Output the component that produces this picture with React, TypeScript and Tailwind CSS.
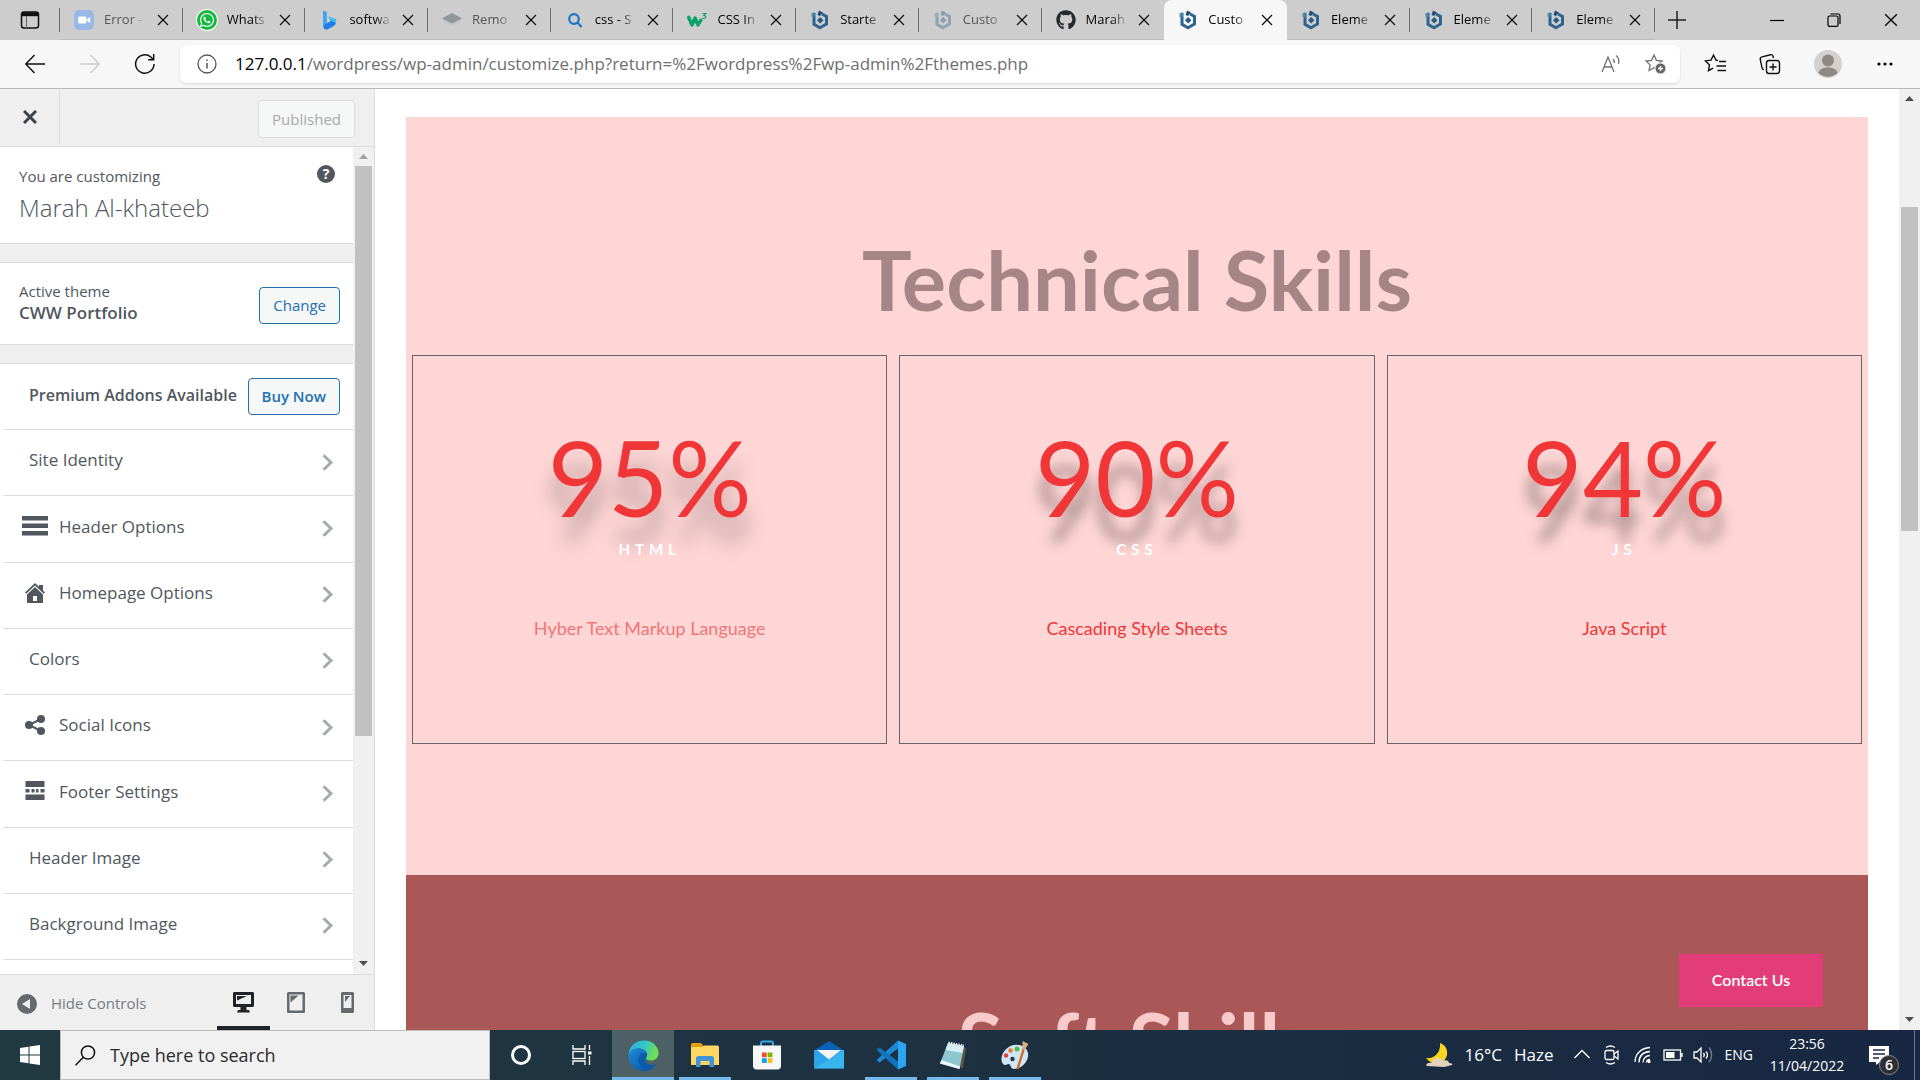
import React from "react";
import { FaGithub, FaWhatsapp } from "react-icons/fa";

type IconProps = { className?: string };

/* ---------- Browser icons ---------- */

const TabActionsIcon = () => (
  <svg className="size-5" viewBox="0 0 20 20" fill="none" stroke="#111" strokeWidth="1.5">
    <rect x="1.5" y="2" width="17" height="16" rx="2.5" />
    <path d="M2 4.2h16" strokeWidth="4" />
    <path d="M6.5 6v12" strokeWidth="1" stroke="#666" />
  </svg>
);

const ZoomIcon = () => (
  <svg className="size-5" viewBox="0 0 20 20">
    <rect width="20" height="20" rx="5" fill="#98b8e8" />
    <rect x="4" y="6.5" width="8.5" height="7" rx="1.5" fill="#fff" />
    <path d="M13.2 9l3-2v6l-3-2z" fill="#fff" />
  </svg>
);

const WhatsappIcon = () => (
  <span className="flex size-5 items-center justify-center rounded-full bg-[#12b93c] ring-1 ring-white">
    <FaWhatsapp className="size-4 text-white" />
  </span>
);

const BingIcon = () => (
  <svg className="size-5" viewBox="0 0 20 20">
    <path d="M4 0.5l3.8 1.4v11.4L4.2 15.4z" fill="#3aa4f2" />
    <path d="M4.2 15.2l3.6-2 4-2-2.2-4.6L17 9.4c.6 3.8-.6 5.6-3 7l-5.600 3c-2.400.7-4.200-1-4.200-4.200z" fill="#1f7de8" />
    <path d="M9.500 6.600L15.500 9c2 1.200 2 3 1.200 4.400-1-1.400-2.500-2-4.700-2.600z" fill="#3cc5f3" />
  </svg>
);

const LayersIcon = () => (
  <svg className="size-5" viewBox="0 0 20 20">
    <path d="M10 4.500l10 5.500-10 5.500L0 10z" fill="#bfc3c6" />
    <path d="M10 3l10 5.200-10 5.200L0 8.200z" fill="#90979c" />
  </svg>
);

const SearchTabIcon = () => (
  <svg className="size-5" viewBox="0 0 20 20" fill="none" stroke="#1a74c9" strokeWidth="2.200">
    <circle cx="9" cy="9" r="4.800" />
    <path d="M12.600 12.800l4 4.200" />
  </svg>
);

const W3Icon = () => (
  <svg className="size-5" viewBox="0 0 20 20" fill="none" stroke="#0ba26b">
    <path d="M1 6l4 9 3-7 3 7 3.500-6" strokeWidth="3.400" strokeLinejoin="round" />
    <path d="M15.500 3.500h3.200l-1.700 2c2.200 0 2.200 3-.2 3-.8 0-1.300-.3-1.600-.8" strokeWidth="1.200" />
  </svg>
);

const CustomIcon = ({ className = "" }: IconProps) => (
  <svg className={`size-5 ${className}`} viewBox="0 0 20 20" fill="none">
    <path d="M4 3v11.300l6 3.400 6.500-3.700V6.500L12 4" stroke="#2f648f" strokeWidth="3" />
    <path d="M9 0.500l4 2-3 3.500-2.500-1z" fill="#1f4e78" />
    <path d="M1.500 3.500l3-1.500v5h-3z" fill="#4f86ad" />
    <path d="M10.200 7l3.200 3.200-3.200 3.200L7 10.200z" fill="#2a5a85" />
  </svg>
);

const CloseIcon = ({ className = "" }: IconProps) => (
  <svg className={className} viewBox="0 0 12 12" stroke="currentColor" strokeWidth="1.300" fill="none">
    <path d="M1 1l10 10M11 1L1 11" />
  </svg>
);

type Tab = { title: string; icon: React.ReactNode; muted?: boolean; active?: boolean; divider?: boolean };

const tabs: Tab[] = [
  { title: "Error -", icon: <ZoomIcon />, muted: true, divider: true },
  { title: "Whats", icon: <WhatsappIcon />, divider: true },
  { title: "softwa", icon: <BingIcon />, divider: true },
  { title: "Remo", icon: <LayersIcon />, muted: true, divider: true },
  { title: "css - S", icon: <SearchTabIcon />, divider: true },
  { title: "CSS In", icon: <W3Icon />, divider: true },
  { title: "Starte", icon: <CustomIcon />, divider: true },
  { title: "Custo", icon: <CustomIcon className="opacity-40" />, muted: true, divider: true },
  { title: "Marah", icon: <FaGithub className="size-5 text-[#24292f]" /> },
  { title: "Custo", icon: <CustomIcon />, active: true },
  { title: "Eleme", icon: <CustomIcon />, divider: true },
  { title: "Eleme", icon: <CustomIcon />, divider: true },
  { title: "Eleme", icon: <CustomIcon />, divider: true },
];

function TabStrip() {
  return (
    <div className="flex h-10 shrink-0 bg-[#cdcdcd] text-[#111]">
      <button aria-label="Tab actions" className="relative flex w-[60px] shrink-0 items-center justify-center">
        <TabActionsIcon />
        <span className="absolute right-0 h-6 w-px bg-[#6f6f6f]" />
      </button>
      <div className="flex min-w-0 flex-1">
        {tabs.map((tab, i) => (
          <div
            key={i}
            className={`relative flex min-w-0 flex-1 items-center pl-3.5 pr-3 ${tab.active ? "rounded-t-lg bg-[#f7f7f7]" : "border-b border-[#bdbdbd]"}`}
          >
            <span className="flex shrink-0">{tab.icon}</span>
            <a
              href="#"
              className={`ml-2.5 min-w-0 flex-1 whitespace-nowrap text-[13px] mask-r-from-60% ${tab.muted ? "text-[#555]" : "text-black"}`}
            >
              {tab.title}
            </a>
            <button aria-label={`Close ${tab.title}`} className="ml-2 flex size-4 shrink-0 items-center justify-center">
              <CloseIcon className="size-3" />
            </button>
            {tab.divider && <span className="absolute right-0 h-6 w-px bg-[#6f6f6f]" />}
          </div>
        ))}
      </div>
      <div className="flex w-[265px] shrink-0 items-center">
        <button aria-label="New tab" className="flex w-11 justify-center">
          <svg className="size-[18px]" viewBox="0 0 18 18" stroke="#222" strokeWidth="1.500">
            <path d="M9 0v18M0 9h18" />
          </svg>
        </button>
        <div className="ml-auto flex">
          <button aria-label="Minimise" className="flex w-[57px] items-center justify-center">
            <svg className="size-3.5" viewBox="0 0 14 14" stroke="#000" strokeWidth="1.200">
              <path d="M0 7.500h14" />
            </svg>
          </button>
          <button aria-label="Restore" className="flex w-[57px] items-center justify-center">
            <svg className="size-3.5" viewBox="0 0 14 14" stroke="#000" fill="none" strokeWidth="1.200">
              <rect x="1" y="3" width="10" height="10.400" rx="1.500" />
              <path d="M3.500 1h7.500c1.500 0 2 .8 2 2v8" />
            </svg>
          </button>
          <button aria-label="Close window" className="flex w-[58px] items-center justify-center">
            <CloseIcon className="size-3.5" />
          </button>
        </div>
      </div>
    </div>
  );
}

const starPath = "M10 2l2.400 5.300 5.600.7-4.100 3.900 1 5.700L10 14.800l-4.900 2.800 1-5.700L2 8l5.600-.7z";

function Toolbar() {
  return (
    <div className="flex h-[49px] shrink-0 items-center border-b border-[#b9b9b9] bg-[#f7f7f7]">
      <div className="flex w-[180px] shrink-0 items-center pl-[7px]">
        <button aria-label="Back" className="flex w-[55px] justify-center">
          <svg className="size-5" viewBox="0 0 20 20" fill="none" stroke="#111" strokeWidth="1.400">
            <path d="M20 10H1M9.500 1L0.800 10l8.700 9" />
          </svg>
        </button>
        <button aria-label="Forward" className="flex w-[55px] justify-center" disabled>
          <svg className="size-5" viewBox="0 0 20 20" fill="none" stroke="#ccc" strokeWidth="1.400">
            <path d="M0 10h19M10.500 1l8.700 9-8.700 9" />
          </svg>
        </button>
        <button aria-label="Refresh" className="flex w-[55px] justify-center">
          <svg className="size-[22px]" viewBox="0 0 22 22" fill="none" stroke="#111" strokeWidth="1.500">
            <path d="M20 11a9.200 9.200 0 1 1-3.200-7l2.600 2.600M19.700 1v5.800h-5.600" />
          </svg>
        </button>
      </div>
      <div className="flex h-[38px] min-w-0 flex-1 items-center rounded-md bg-white pl-[17px] pr-3.5 shadow-sm">
        <svg className="size-5 shrink-0" viewBox="0 0 20 20" fill="none" stroke="#555" strokeWidth="1.300">
          <circle cx="10" cy="10" r="9" />
          <path d="M10 9v5.500M10 5.500v1.500" strokeWidth="1.500" />
        </svg>
        <a href="#" className="ml-[18px] flex-1 truncate text-[17px] text-[#6e6e6e]">
          <span className="text-black">127.0.0.1</span>/wordpress/wp-admin/customize.php?return=%2Fwordpress%2Fwp-admin%2Fthemes.php
        </a>
        <button aria-label="Read aloud" className="mr-[23px]">
          <svg className="size-5" viewBox="0 0 20 20" fill="none" stroke="#707070" strokeWidth="1.300">
            <path d="M1 18L7 3l6 15M3 13h8M12 5c1 1 1.400 2.400 1.200 4M15 1.500c2.500 2 3.400 5 2.600 8.500" />
          </svg>
        </button>
        <button aria-label="Add to favorites">
          <svg className="size-[22px]" viewBox="0 0 22 22" fill="none" stroke="#707070" strokeWidth="1.300">
            <path d={starPath} />
            <circle cx="16.500" cy="15.500" r="5.500" fill="#666" stroke="#fff" strokeWidth="1" />
            <path d="M16.500 13v5M14 15.500h5" stroke="#fff" />
          </svg>
        </button>
      </div>
      <div className="flex w-60 shrink-0 items-center pl-2">
        <button aria-label="Favorites" className="flex w-[54px] justify-center">
          <svg className="size-[22px]" viewBox="0 0 22 22" fill="none" stroke="#111" strokeWidth="1.400">
            <path d="M14 7.500l-2-.4L9.500 2 7 7.100l-5.600.8 4.100 4-1 5.700 4.600-2.400M15 8.500h7M12.500 13H22M13.500 17.500H22" />
          </svg>
        </button>
        <button aria-label="Collections" className="flex w-14 justify-center">
          <svg className="size-[22px]" viewBox="0 0 22 22" fill="none" stroke="#111" strokeWidth="1.400">
            <rect x="7.500" y="7.500" width="13" height="13" rx="2.500" />
            <path d="M14 10.500v7M10.500 14h7M5 16.500c-1 0-1.700-.5-2-1.700L1.300 6.500C1 5 1.700 4.200 3 3.900l8.500-2.200c1.400-.2 2.200.4 2.500 1.500l.5 1.800" />
          </svg>
        </button>
        <button aria-label="Profile" className="flex w-[60px] justify-center">
          <svg className="size-7" viewBox="0 0 28 28">
            <circle cx="14" cy="14" r="14" fill="#d3d0cd" />
            <circle cx="14" cy="10.500" r="6" fill="#8d8884" />
            <path d="M4.500 23c1-4 4.500-5.500 9.500-5.500s8.500 1.500 9.500 5.500a14 14 0 0 1-19 0z" fill="#8d8884" />
          </svg>
        </button>
        <button aria-label="Settings and more" className="flex w-[54px] justify-center">
          <svg className="size-4" viewBox="0 0 16 16">
            <circle cx="2" cy="8" r="1.600" />
            <circle cx="8" cy="8" r="1.600" />
            <circle cx="14" cy="8" r="1.600" />
          </svg>
        </button>
      </div>
    </div>
  );
}

/* ---------- Scroll bar ---------- */

function ScrollBar({ topMuted, children }: { topMuted?: boolean; children: React.ReactNode }) {
  return (
    <div className="flex w-[21px] shrink-0 flex-col bg-[#f0f0f0]">
      <button aria-label="Scroll up" className="flex h-[19px] shrink-0 items-center justify-center">
        <svg className="h-[5px] w-[9px]" viewBox="0 0 9 5" fill={topMuted ? "#a0a0a0" : "#505050"}>
          <path d="M0 5l4.500-5L9 5z" />
        </svg>
      </button>
      <div className="flex min-h-0 flex-1 flex-col px-0.5">{children}</div>
      <button aria-label="Scroll down" className="flex h-[22px] shrink-0 items-center justify-center">
        <svg className="h-[5px] w-[9px]" viewBox="0 0 9 5" fill="#505050">
          <path d="M0 0h9L4.500 5z" />
        </svg>
      </button>
    </div>
  );
}

/* ---------- Customizer sidebar ---------- */

const MenuBarsIcon = () => (
  <svg className="h-5 w-[26px]" viewBox="0 0 26 20" fill="#50575e">
    <path d="M0 0h26v4.500H0zM0 7.500h26V12H0zM0 15h26v4.500H0z" />
  </svg>
);

const HomeIcon = () => (
  <svg className="size-5" viewBox="0 0 20 20" fill="#50575e">
    <path d="M10 0l4 3.800V2h4v5.500l2 2-1.200 1.200L10 2.400 1.200 10.700 0 9.500z" />
    <path fillRule="evenodd" d="M10 4l8 7.500V20H2v-8.500zM8 13v5h4v-5z" />
  </svg>
);

const ShareIcon = () => (
  <svg className="size-5" viewBox="0 0 20 20" fill="#50575e">
    <circle cx="4" cy="10" r="4" />
    <circle cx="16" cy="4" r="4" />
    <circle cx="16" cy="16" r="4" />
    <path d="M16 4L4 10l12 6" fill="none" stroke="#50575e" strokeWidth="2" />
  </svg>
);

const FooterIcon = () => (
  <svg className="size-5" viewBox="0 0 20 20" fill="#50575e">
    <path d="M0.500 0h19v6h-19zM0.500 8h4v3.500h-4zM6.500 8h3v3.500h-3zM11 8h2.500v3.500H11zM15.500 8h4v3.500h-4zM0.500 13.500h19v5.500h-19z" />
  </svg>
);

const panels: { label: string; icon?: React.ReactNode }[] = [
  { label: "Site Identity" },
  { label: "Header Options", icon: <MenuBarsIcon /> },
  { label: "Homepage Options", icon: <HomeIcon /> },
  { label: "Colors" },
  { label: "Social Icons", icon: <ShareIcon /> },
  { label: "Footer Settings", icon: <FooterIcon /> },
  { label: "Header Image" },
  { label: "Background Image" },
];

function Sidebar() {
  return (
    <aside className="flex w-[375px] shrink-0 flex-col border-r border-[#dcdcde] bg-[#efefef] text-[#50575e]">
      <header className="flex h-[58px] shrink-0 items-start justify-between border-b border-[#dcdcde]">
        <button aria-label="Close customizer" className="flex h-[55px] w-[60px] items-center justify-center border-r border-[#dcdcde] text-[#3c434a]">
          <svg className="size-3.5" viewBox="0 0 14 14" stroke="currentColor" strokeWidth="3">
            <path d="M1 1l12 12M13 1L1 13" />
          </svg>
        </button>
        <button disabled className="mr-[19px] mt-[11px] h-[38px] rounded-[4px] border border-[#dcdcde] bg-[#f6f7f7] px-[13px] text-[15px] text-[#a7aaad]">
          Published
        </button>
      </header>

      <div className="flex min-h-0 flex-1">
        <div className="flex min-w-0 flex-1 flex-col">
          <section className="flex h-[97px] shrink-0 justify-between border-b border-[#dcdcde] bg-white pl-[19px] pr-[18px] pt-[17px]">
            <div>
              <p className="text-[15px] leading-6">You are customizing</p>
              <h1 className="mt-1 text-2xl font-light leading-8">Marah Al-khateeb</h1>
            </div>
            <button aria-label="Help" className="mt-px flex size-[18px] items-center justify-center rounded-full bg-[#50575e] text-sm font-bold text-white">
              ?
            </button>
          </section>

          <section className="mt-[18px] flex h-[83px] shrink-0 items-center justify-between border-y border-[#dcdcde] bg-white pl-[19px] pr-[13px]">
            <div className="pb-0.5">
              <p className="text-[15px] leading-5">Active theme</p>
              <h2 className="text-[17px] font-semibold leading-6">CWW Portfolio</h2>
            </div>
            <button className="mt-1 h-[37px] rounded-[4px] border border-[#2271b1] bg-[#f6f7f7] px-[13px] text-[15px] text-[#2271b1]">Change</button>
          </section>

          <section className="mt-[18px] flex h-[66px] shrink-0 items-center justify-between border-t border-[#dcdcde] bg-white pb-px pl-[29px] pr-[13px]">
            <h2 className="whitespace-nowrap pb-0.5 text-base font-semibold">Premium Addons Available</h2>
            <button className="h-[37px] whitespace-nowrap rounded-[4px] border border-[#2271b1] bg-[#f6f7f7] px-[13px] text-[15px] font-semibold text-[#2271b1]">
              Buy Now
            </button>
          </section>

          <ul className="flex min-h-0 flex-1 flex-col bg-white pb-[15px] pl-[3px]">
            {panels.map((panel) => (
              <li key={panel.label} className="flex min-h-0 flex-1 border-t border-[#dcdcde]">
                <button className="flex w-full items-center pb-px pr-[19px] text-left">
                  {panel.icon && (
                    <span className="ml-4 flex w-10 items-center pb-1 pl-[3px]">
                      <span className="flex w-[26px] justify-center">{panel.icon}</span>
                    </span>
                  )}
                  <span className={`flex-1 pb-1 text-[17px] font-medium ${panel.icon ? "" : "pl-[26px]"}`}>{panel.label}</span>
                  <svg className="h-[17px] w-3" viewBox="0 0 12 17" fill="none" stroke="#a7aaad" strokeWidth="3">
                    <path d="M1.500 1.200l7.500 7.300-7.500 7.300" />
                  </svg>
                </button>
              </li>
            ))}
            <li className="-mb-[15px] h-[15px] shrink-0 border-t border-[#dcdcde]" />
          </ul>
        </div>
        <ScrollBar topMuted>
          <div className="min-h-0 flex-[29] bg-[#c1c1c1]" />
          <div className="min-h-0 flex-[11]" />
        </ScrollBar>
      </div>

      <footer className="flex h-14 shrink-0 items-stretch justify-between border-t border-[#dcdcde] bg-[#efefef]">
        <button className="flex items-center gap-3.5 pl-[17px] pt-0.5 text-[15px] text-[#787c82]">
          <svg className="size-5" viewBox="0 0 20 20">
            <circle cx="10" cy="10" r="10" fill="#656a6f" />
            <path d="M13 5v10l-8-5z" fill="#efefef" />
          </svg>
          Hide Controls
        </button>
        <div className="flex">
          <button aria-label="Desktop preview" className="flex w-[53px] items-center justify-center border-b-4 border-[#1d2327] pt-1">
            <svg className="size-[21px]" viewBox="0 0 21 21" fill="#1d2327">
              <path fillRule="evenodd" d="M1 0h19l1 1v13l-1 1h-6.500v3H16l1 2.500H4L5 18h2.500v-3H1l-1-1V1zM3 3v9h15V3z" />
              <path d="M4 4h10L4 8.500z" />
            </svg>
          </button>
          <button aria-label="Tablet preview" className="flex w-[51px] items-center justify-center">
            <svg className="h-[21px] w-[18px]" viewBox="0 0 18 21" fill="#656a6f">
              <path fillRule="evenodd" d="M1 0h16l1 1v19l-1 1H1l-1-1V1zM2.500 2.500v16h13v-16z" />
              <path d="M3.500 3.500h8l-8 7z" />
            </svg>
          </button>
          <button aria-label="Mobile preview" className="flex w-[53px] items-center justify-center">
            <svg className="h-[21px] w-[13px]" viewBox="0 0 13 21" fill="#656a6f">
              <path fillRule="evenodd" d="M1 0h11l1 1v19l-1 1H1l-1-1V1zM2.500 3v13h8V3z" />
              <path d="M4 4h5l-5 6z" />
            </svg>
          </button>
        </div>
      </footer>
    </aside>
  );
}

/* ---------- Site preview ---------- */

const skills = [
  { value: "95%", name: "HTML", text: "Hyber Text Markup Language", textColor: "text-[#f07676]", shadow: "[text-shadow:0_25px_20px_rgba(0,0,0,0.3)]" },
  { value: "90%", name: "CSS", text: "Cascading Style Sheets", textColor: "text-[#f13637]", shadow: "[text-shadow:0_25px_14px_rgba(0,0,0,0.35)]" },
  { value: "94%", name: "JS", text: "Java Script", textColor: "text-[#f13637]", shadow: "[text-shadow:0_25px_14px_rgba(0,0,0,0.35)]" },
];

function Preview() {
  return (
    <div className="relative flex min-w-0 flex-1 bg-white">
      <main className="min-w-0 flex-1 overflow-hidden px-[31px] pt-7 font-[Lato,sans-serif]">
        <section className="bg-[#ffd6d6] px-1.5 pb-[131px] pt-[114px]">
          <h2 className="text-center text-[83px] font-bold leading-[96px] text-[#a58585]">Technical Skills</h2>
          <div className="mt-7 grid grid-cols-3 gap-3">
            {skills.map((skill) => (
              <article key={skill.name} className="flex h-[389px] flex-col items-center border border-[#666] pt-[65px] text-center">
                <p className={`text-[104px] leading-[112px] text-[#f13637] ${skill.shadow}`}>{skill.value}</p>
                <h3 className="relative mt-1 text-[15px] font-bold leading-6 tracking-[5px] text-white">{skill.name}</h3>
                <p className={`mt-[53px] text-lg leading-7 ${skill.textColor}`}>{skill.text}</p>
              </article>
            ))}
          </div>
        </section>
        <section className="h-80 bg-[#aa5757] pt-[118px]">
          <h2 className="text-center text-[83px] font-bold leading-[96px] text-[#f9caca]">Soft Skills</h2>
        </section>
      </main>
      <a href="#" className="absolute bottom-[23px] right-[97px] flex h-[53px] w-36 items-center justify-center bg-[#e23d78] pb-0.5 font-[Lato,sans-serif] text-base font-semibold text-white">
        Contact Us
      </a>
      <ScrollBar>
        <div className="min-h-0 flex-[11]" />
        <div className="min-h-0 flex-[36] bg-[#c1c1c1]" />
        <div className="min-h-0 flex-[53]" />
      </ScrollBar>
    </div>
  );
}

/* ---------- Taskbar ---------- */

const EdgeIcon = () => (
  <svg className="size-[31px]" viewBox="0 0 31 31">
    <defs>
      <linearGradient id="edgeTop" x1="0" y1="0" x2="1" y2="0.300">
        <stop offset="0" stopColor="#2fa9e6" />
        <stop offset="0.550" stopColor="#31c6c9" />
        <stop offset="1" stopColor="#6fe04e" />
      </linearGradient>
      <linearGradient id="edgeLow" x1="0" y1="0" x2="1" y2="1">
        <stop offset="0" stopColor="#1b8ddb" />
        <stop offset="1" stopColor="#0c4f9c" />
      </linearGradient>
    </defs>
    <path d="M0.500 15C1 6 7.500 0.500 16 0.500c9 0 14.500 6.500 14.500 12.500 0 5-3.500 7.500-7.500 7.500-3 0-5-1-5-2.300 0-.8 1.200-1.500 1.200-3.500 0-3.500-4-6.200-8.700-6.200C6 8.500 2 11 .5 15z" fill="url(#edgeTop)" />
    <path d="M0.500 15C2 10.500 6 8.500 10.500 8.500c4.500 0 8 2.300 8.600 5.200C15 11.500 11 15 11 19.500c0 5 5 8.500 10 8.500 2.500 0 4-.5 5.500-1.500C24 29.500 20.500 31 16 31 7 31 0.300 24 0.500 15z" fill="url(#edgeLow)" />
    <path d="M19.100 13.700C14 11.500 10.500 15.500 10.500 20c0 5.500 5 10.500 10.500 9.800 3.500-1 6.500-3.500 7.800-6.300-7 3.300-13 .5-11-5.300z" fill="#0d5bab" />
  </svg>
);

const ExplorerIcon = () => (
  <svg className="h-6 w-7" viewBox="0 0 28 24">
    <path d="M0 1.500C0 .7.700 0 1.500 0H10l2.500 3H26v4H0z" fill="#e0a010" />
    <path d="M0 4h11l2-1.500h13c1 0 2 .7 2 1.500v18H0z" fill="#fdd663" />
    <path d="M5 24v-8.500C5 14 6 13 7.500 13h13c1.500 0 2.500 1 2.500 2.500V24h-4.500v-6h-9v6z" fill="#3f93d6" />
  </svg>
);

const StoreIcon = () => (
  <svg className="size-[30px]" viewBox="0 0 30 30">
    <path d="M9 7V3.500C9 2 9.500 1.500 11 1.500h8c1.500 0 2 .5 2 2V7" fill="none" stroke="#35a9ec" strokeWidth="2" />
    <path d="M1 5.500h28V26c0 2.200-1.300 3.500-3.500 3.500h-21C2.300 29.500 1 28.200 1 26z" fill="#f7f7f7" />
    <path d="M10 12.500h4.700v4.700H10z" fill="#f04e24" />
    <path d="M15.700 12.500h4.700v4.700h-4.700z" fill="#7db901" />
    <path d="M10 18.200h4.700v4.700H10z" fill="#04a1ed" />
    <path d="M15.700 18.200h4.700v4.700h-4.700z" fill="#fdb813" />
  </svg>
);

const MailIcon = () => (
  <svg className="size-[30px]" viewBox="0 0 30 30">
    <path d="M0 10.500L15 1l15 9.500z" fill="#0a62b8" />
    <path d="M0 10h30v18.500H0z" fill="#2ba4ea" />
    <path d="M3 10h24L15 19.500z" fill="#f4f4f4" />
    <path d="M0 28.500L30 10v18.500z" fill="#41c2f2" opacity="0.600" />
  </svg>
);

const VsCodeIcon = () => (
  <svg className="size-[30px]" viewBox="0 0 30 30">
    <path d="M22 0.500L30 4v22l-8 3.500z" fill="#2aa6f0" />
    <path d="M22 0.500v8L3.500 22.500 0.500 20z" fill="#1b8ad6" />
    <path d="M22 29.500v-8L3.500 7.500.5 10z" fill="#1273bd" />
  </svg>
);

const NotepadIcon = () => (
  <svg className="size-[29px]" viewBox="0 0 29 29">
    <path d="M24 5l3 2.500-3 19.500-4-1z" fill="#5d5441" />
    <path d="M9 2l16 3-4.500 23L1 22.500z" fill="#8cc6d0" />
    <path d="M9 2l16 3-1.500 7L6.500 9z" fill="#d6eef2" />
    <path d="M1 22.500l19.500 5.500.6-2.500L2.500 19z" fill="#eef7f9" />
    <path d="M9.500 1.500l15.500 3" stroke="#e9e9e9" strokeWidth="2" strokeDasharray="1.500 1" />
  </svg>
);

const PaintIcon = () => (
  <svg className="size-[29px]" viewBox="0 0 29 29">
    <path d="M13 4C6 5 0 12 0.500 19c.3 4 3 6 5.500 4.500 2-1.200 3-.5 3.500 1.500.6 2.500 3 3.500 6.500 2.500C23 25.500 28 18.500 27 12 26 6.500 20 3 13 4z" fill="#cfe6f5" />
    <circle cx="5" cy="14.500" r="2.300" fill="#e0453b" />
    <circle cx="9.500" cy="9.500" r="2.300" fill="#e8792e" />
    <circle cx="16" cy="8" r="2.500" fill="#54b948" />
    <circle cx="11.500" cy="18" r="2.200" fill="#22364a" />
    <path d="M23 7l-6.500 21" stroke="#cf6b22" strokeWidth="2.400" />
    <path d="M21.500 0l6 3-4 6-2-1z" fill="#d8b07a" />
  </svg>
);

const apps = [
  { name: "Microsoft Edge", icon: <EdgeIcon />, open: true, active: true },
  { name: "File Explorer", icon: <ExplorerIcon />, open: true },
  { name: "Microsoft Store", icon: <StoreIcon /> },
  { name: "Mail", icon: <MailIcon /> },
  { name: "Visual Studio Code", icon: <VsCodeIcon />, open: true },
  { name: "Notepad", icon: <NotepadIcon />, open: true },
  { name: "Paint", icon: <PaintIcon />, open: true },
];

function Taskbar() {
  return (
    <div className="flex h-[50px] shrink-0 bg-linear-to-r from-[#213a41] to-[#182742] text-white">
      <button aria-label="Start" className="flex w-[60px] shrink-0 items-center justify-center">
        <svg className="size-5" viewBox="0 0 20 20" fill="#fff">
          <path d="M0 3l8.500-1.200v7.700H0zM9.500 1.600L20 0v9.500H9.500zM0 10.500h8.500v7.700L0 17zM9.500 10.500H20V20L9.500 18.400z" />
        </svg>
      </button>
      <label className="flex w-[430px] shrink-0 items-center border border-[#bcbcbc] bg-[#f1f1f1] pl-3.5">
        <svg className="size-[21px] shrink-0" viewBox="0 0 21 21" fill="none" stroke="#111" strokeWidth="1.500">
          <circle cx="13" cy="7.500" r="6.600" />
          <path d="M8.300 12.200L0.500 20.300" />
        </svg>
        <input aria-label="Search" placeholder="Type here to search" className="ml-3.5 min-w-0 flex-1 bg-transparent text-lg outline-none placeholder:text-[#2b2b2b]" />
      </label>
      <button aria-label="Cortana" className="flex w-[61px] items-center justify-center">
        <span className="size-5 rounded-full border-[3px] border-white" />
      </button>
      <button aria-label="Task view" className="flex w-[61px] items-center justify-center">
        <svg className="size-5" viewBox="0 0 20 20" fill="none" stroke="#fff" strokeWidth="1.300">
          <path d="M1 0v4h12V0M1 20v-4h12v4M17.500 0v5M17.500 11v9" />
          <rect x="1" y="6.500" width="12" height="7" />
          <path d="M16 8h3.500" strokeWidth="3" />
        </svg>
      </button>
      {apps.map((app) => (
        <button
          key={app.name}
          aria-label={app.name}
          className={`relative flex w-[62px] items-center justify-center ${app.active ? "bg-[#4e6167]" : ""}`}
        >
          {app.icon}
          {app.open && <span className={`absolute bottom-0 h-[3px] bg-[#76b9ed] ${app.active ? "inset-x-0" : "inset-x-[5px]"}`} />}
        </button>
      ))}
      <div className="ml-auto flex items-center">
        <button className="mr-5 flex items-center gap-3 text-[17px]">
          <svg className="h-6 w-7" viewBox="0 0 28 24">
            <path d="M15 0c5 2 8 6 7 12-1 5-5 8-10 8C7 20 3 18 1 15c7 1 15-4 14-15z" fill="#fbd51f" />
            <path d="M2 23c-2-1 0-3.500 5-3.500C8 16 10 15 13 15c3 0 4 1 5 2.500 4-1 6 .5 6 2.500 3 0 4 1.500 3 2l-8 2z" fill="#e3d3bd" />
          </svg>
          <span>16°C</span>
          <span>Haze</span>
        </button>
        <button aria-label="Show hidden icons" className="mr-3.5">
          <svg className="h-5 w-4" viewBox="0 0 16 20" fill="none" stroke="#fff" strokeWidth="1.300">
            <path d="M0.500 13L8 5.500l7.500 7.500" />
          </svg>
        </button>
        <button aria-label="Meet now" className="mr-3.5">
          <svg className="h-5 w-4" viewBox="0 0 16 20" fill="none" stroke="#fff" strokeWidth="1.300">
            <rect x="1" y="5.500" width="9" height="9" rx="1.500" />
            <path d="M10 9l4-3v8l-4-3M2 2.500c3-2 6-2 9 0M2 17.500c3 2 6 2 9 0" />
          </svg>
        </button>
        <button aria-label="Network" className="mr-3">
          <svg className="h-5 w-[17px]" viewBox="0 0 17 20" fill="none" stroke="#fff" strokeWidth="1.300">
            <path d="M1 17C1 9 7 3 16 2.500M5 17.500C5 11 9 7 16 6.500M9 17.500c0-4 3-7 7-7M12.500 17.500c0-2 1.500-3 3.500-3" />
            <circle cx="15" cy="16.500" r="1" fill="#fff" />
          </svg>
        </button>
        <button aria-label="Battery" className="mr-2.5">
          <svg className="h-5 w-5" viewBox="0 0 20 20" fill="none" stroke="#fff" strokeWidth="1.300">
            <rect x="1" y="5" width="16.500" height="10" />
            <path d="M19 8v4" strokeWidth="1.500" />
            <path d="M3 7h8.500v6H3z" fill="#fff" stroke="none" />
          </svg>
        </button>
        <button aria-label="Volume" className="mr-3">
          <svg className="h-5 w-5" viewBox="0 0 20 20" fill="none" stroke="#fff" strokeWidth="1.300">
            <path d="M1 7h3l4-4v14l-4-4H1zM10.500 8c.8 1 .8 3 0 4M13 6.500c1.700 2 1.700 5 0 7" />
            <path d="M16 2.500c3.500 4 3.500 11 0 15" opacity="0.400" />
          </svg>
        </button>
        <button className="text-sm">ENG</button>
        <button className="ml-4 flex w-[76px] flex-col items-center text-sm leading-[22px]">
          <span>23:56</span>
          <span>11/04/2022</span>
        </button>
        <button aria-label="Notifications" className="relative ml-6 mr-[25px]">
          <svg className="h-5 w-5" viewBox="0 0 20 20">
            <path d="M0 1h20v16h-9l-4 3v-3H0z" fill="#fff" />
            <path d="M4 5h12M4 9h12M4 13h6" stroke="#1b2a42" strokeWidth="1.300" />
          </svg>
          <span className="absolute -bottom-2.5 -right-2.5 flex size-5 items-center justify-center rounded-full border border-[#888] bg-[#2d2f33] text-sm font-semibold">6</span>
        </button>
        <span className="mr-[5px] h-[50px] w-px bg-[#6b7688]" />
      </div>
    </div>
  );
}

export default function App() {
  return (
    <div className="flex h-screen flex-col overflow-hidden bg-white font-['Open_Sans','Noto_Sans',sans-serif]">
      <TabStrip />
      <Toolbar />
      <div className="flex min-h-0 flex-1">
        <Sidebar />
        <Preview />
      </div>
      <Taskbar />
    </div>
  );
}
